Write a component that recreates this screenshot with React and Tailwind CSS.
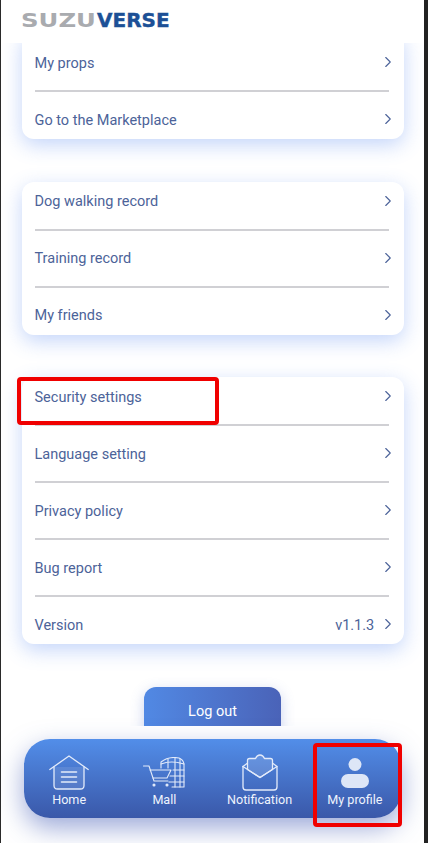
import React from 'react';
import { ChevronRight } from 'lucide-react';

const groups = [
    [{ label: 'My props' }, { label: 'Go to the Marketplace' }],
    [{ label: 'Dog walking record' }, { label: 'Training record' }, { label: 'My friends' }],
    [
        { label: 'Security settings' },
        { label: 'Language setting' },
        { label: 'Privacy policy' },
        { label: 'Bug report' },
        { label: 'Version', value: 'v1.1.3' },
    ],
];

const HomeIcon = () => (
    <svg width="40" height="35" viewBox="0 0 40 35" fill="none" stroke="#e3ebfa" strokeWidth="1.3" strokeLinecap="round" strokeLinejoin="round">
        <path d="M0.8 14.5 L20 1 L39.2 14.5" />
        <path d="M5 12 V30.5 Q5 34 8.5 34 H31.5 Q35 34 35 30.5 V12" fill="#ffffff" fillOpacity="0.1" />
        <path d="M12.5 17 H27.5 M12.5 22 H27.5 M12.5 27 H27.5" strokeWidth="1.6" />
    </svg>
);

const MallIcon = () => (
    <svg width="42" height="32" viewBox="0 0 42 32" fill="none" stroke="#e3ebfa" strokeWidth="1.1" strokeLinecap="round" strokeLinejoin="round">
        <path d="M0.5 9 H6 L11 24 H25" />
        <path d="M7 13 H28 L24 21 H10" />
        <circle cx="11" cy="28" r="1" fill="#e3ebfa" />
        <circle cx="24" cy="28" r="1" fill="#e3ebfa" />
        <path d="M18 11 V5 Q26 -1 36 1 Q41 3 41 8 V30 H29" />
        <path d="M25 2 V11 M32 0.8 V30 M37 1.5 V30" />
        <path d="M18 7 Q28 3 41 7 M30 13 H41 M27 19 H41 M26 25 H41" />
    </svg>
);

const MailIcon = () => (
    <svg width="36" height="37" viewBox="0 0 36 37" fill="none" stroke="#e3ebfa" strokeWidth="1.3" strokeLinecap="round" strokeLinejoin="round">
        <path d="M1 12.5 V33 Q1 36 4 36 H32 Q35 36 35 33 V12.5" />
        <path d="M1 12.5 L18 23.5 L35 12.5 L31 9.5" />
        <path d="M1 12.5 L5 9.5" />
        <path d="M5.5 15.5 V6.5 Q5.5 4.5 7.5 4.5 H13.5 Q15 1 18 1 Q21 1 22.5 4.5 H28.5 Q30.5 4.5 30.5 6.5 V15.5 L18 23.5 Z" fill="#ffffff" fillOpacity="0.14" />
    </svg>
);

const ProfileIcon = () => (
    <svg width="28" height="30" viewBox="0 0 28 30" fill="#dde6f7">
        <circle cx="14" cy="6.5" r="6.5" />
        <rect x="0" y="16" width="28" height="14" rx="7" />
    </svg>
);

const navItems = [
    { label: 'Home', icon: <HomeIcon />, iconClass: 'h-[35px] mt-[1px] mb-[1px]' },
    { label: 'Mall', icon: <MallIcon />, iconClass: 'h-[32px] mt-[3px] mb-[2px]' },
    { label: 'Notification', icon: <MailIcon />, iconClass: 'h-[37px]' },
    { label: 'My profile', icon: <ProfileIcon />, iconClass: 'h-[30px] mt-[4px] mb-[3px]' },
];

const MenuCard = ({ rows, first }) => (
    <div className={`bg-white rounded-xl shadow-[0_6px_20px_rgba(70,125,240,0.32)] ${first ? 'pt-[12px]' : ''}`}>
        {rows.map((row, i) => (
            <div key={row.label}>
                {i > 0 && <div className="h-[2px] bg-[#d0d0d4] ml-[13px] mr-[15px] my-[8px]" />}
                <div className="h-[39px] pt-[2px] flex items-center justify-between pl-[13px] pr-[6.75px] text-[14.5px] text-[#4c6399]">
                    <span>{row.label}</span>
                    <span className="flex items-center">
                        {row.value && <span className="mr-[4.5px]">{row.value}</span>}
                        <ChevronRight className="w-[18px] h-[18px] -mt-[3px]" strokeWidth={1.5} />
                    </span>
                </div>
            </div>
        ))}
    </div>
);

const App = () => {
    return (
        <div className="relative w-[428px] h-[843px] overflow-hidden bg-white font-['Roboto',sans-serif] border-l border-r-4 border-l-[#2a2a2a] border-r-[#222222]">
            <header className="relative z-10 h-[43px] bg-white pl-[20px] pt-[12px]">
                <div className="flex text-[20px] leading-[16px] font-bold font-['DejaVu_Sans',sans-serif]">
                    <span className="w-[76px] inline-block origin-left scale-x-[1.22] text-[#a9abaf]">SUZU</span>
                    <span className="w-[73px] inline-block origin-left text-[#1c5096] [-webkit-text-stroke:0.4px_#1c5096]">VERSE</span>
                </div>
            </header>

            <main className="h-[683px] overflow-hidden">
                <div className="px-[20.5px] -mt-[12px] flex flex-col gap-[42.5px]">
                    {groups.map((rows, i) => (
                        <MenuCard key={i} rows={rows} first={i === 0} />
                    ))}
                    <button className="self-center w-[137px] h-[50px] shrink-0 rounded-xl text-white text-[14.5px] bg-gradient-to-r from-[#5189e4] to-[#4a63b8] shadow-[0_4px_14px_rgba(80,110,200,0.3)]">
                        Log out
                    </button>
                </div>
            </main>

            <nav className="absolute left-[22.5px] top-[739px] w-[377px] h-[79px] rounded-[26px] bg-gradient-to-b from-[#528ee9] to-[#3a58a9] shadow-[0_10px_26px_rgba(60,85,180,0.5)] pt-[15px] text-[12.6px]">
                <div className="-ml-[2px] w-[381px] grid grid-cols-4">
                    {navItems.map((item) => (
                        <div key={item.label} className="flex flex-col items-center">
                            <div className={`flex items-end justify-center ${item.iconClass}`}>{item.icon}</div>
                            <span className="leading-[17px] text-[#eef3fd]">{item.label}</span>
                        </div>
                    ))}
                </div>
            </nav>

            <div className="absolute left-[15.5px] top-[377px] w-[202px] h-[48px] border-[4px] border-[#f00000] rounded-sm" />
            <div className="absolute left-[312px] top-[742.5px] w-[89px] h-[84px] border-[4px] border-[#f00000] rounded-sm" />
        </div>
    );
};

export default App;
